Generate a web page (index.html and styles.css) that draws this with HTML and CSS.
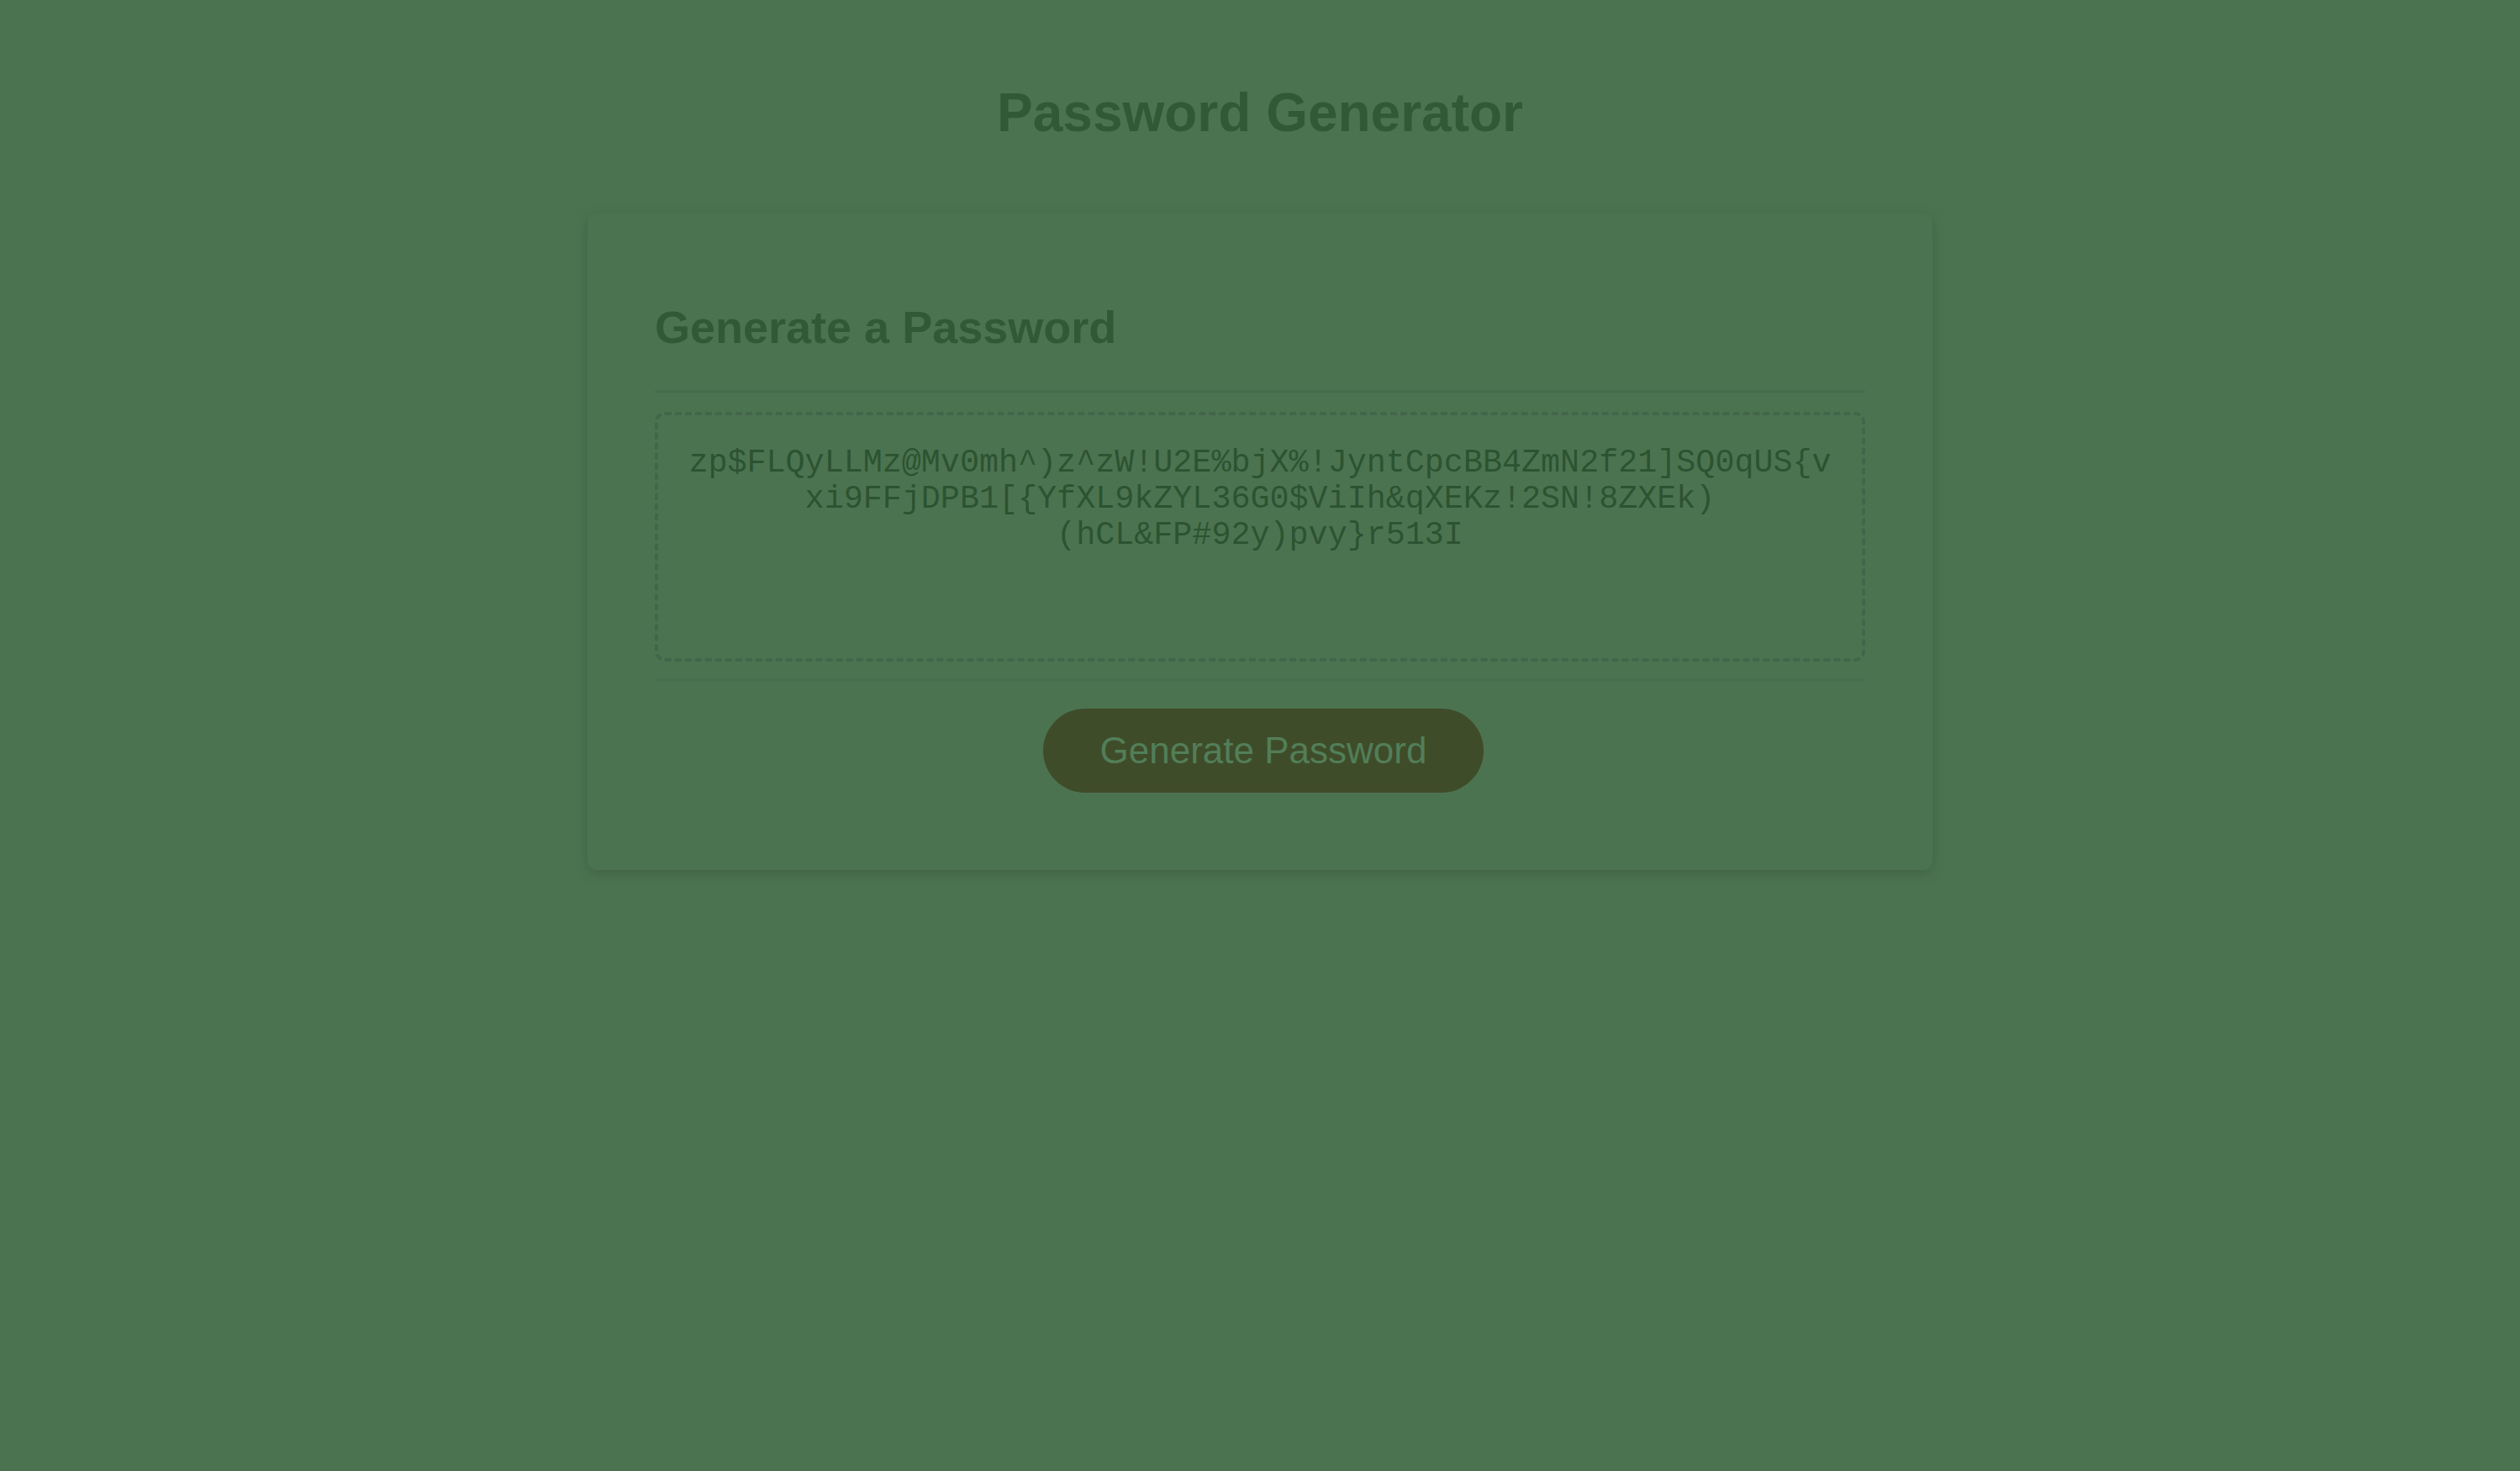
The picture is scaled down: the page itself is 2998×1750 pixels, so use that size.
FILE: index.html
```html
<!DOCTYPE html>
<html lang="en">
<head>
<meta charset="UTF-8">
<title>Password Generator</title>
<link rel="stylesheet" href="styles.css">
</head>
<body>
<div class="wrapper">
  <header>
    <h1>Password Generator</h1>
  </header>
  <div class="card">
    <div class="card-header">
      <h2>Generate a Password</h2>
    </div>
    <div class="card-body">
      <textarea readonly id="password" rows="2" placeholder="Your Secure Password" aria-label="Generated Password">zp$FLQyLLMz@Mv0mh^)z^zW!U2E%bjX%!JyntCpcBB4ZmN2f21]SQ0qUS{vxi9FFjDPB1[{YfXL9kZYL36G0$ViIh&amp;qXEKz!2SN!8ZXEk)(hCL&amp;FP#92y)pvy}r513I</textarea>
    </div>
    <div class="card-footer">
      <button id="generate" class="btn">Generate Password</button>
    </div>
  </div>
</div>
</body>
</html>
```
FILE: styles.css
```css
*, *::before, *::after {
  box-sizing: border-box;
}

html, body {
  margin: 0;
  padding: 0;
  height: 100%;
}

body {
  font-family: "Liberation Sans", Arial, sans-serif;
  background-color: #4c7350;
}

.wrapper {
  height: 100%;
  padding: 54px 40px 0;
}

header {
  text-align: center;
  padding: 0 40px 40px;
  color: #305a35;
}

header h1 {
  font-size: 64px;
  margin: 43px 0;
  font-weight: bold;
}

.card {
  max-width: 1600px;
  margin: 0 auto;
  padding: 60px 80px;
  border-radius: 10px;
  background-color: #4c7350;
  box-shadow: rgba(0, 0, 0, 0.15) 0 4px 16px 0;
  color: #305a35;
  font-size: 36px;
}

.card-header h2 {
  font-size: 54px;
  margin: 44px 0;
}

.card-header::after,
.card-footer::before {
  content: " ";
  display: block;
  width: 100%;
  height: 4px;
  background: #486d4c;
}

.card-body {
  min-height: 200px;
}

#password {
  display: block;
  width: 100%;
  margin: 22px 0 20px;
  padding: 36px 30px 167px;
  border: 4px dashed #42664a;
  border-radius: 12px;
  background: transparent;
  color: #2c5331;
  font-family: "Liberation Mono", "Courier New", monospace;
  font-size: 38.4px;
  line-height: 43px;
  text-align: center;
  resize: none;
  overflow: hidden;
  outline: none;
}

.card-footer {
  text-align: center;
}

.btn {
  display: inline-block;
  border: none;
  background-color: #3f4c2a;
  color: #527e58;
  border-radius: 50px;
  font-family: "Liberation Sans", Arial, sans-serif;
  font-size: 44px;
  line-height: 44px;
  padding: 28px 68px;
  margin: 32px 32px 32px 40px;
  cursor: pointer;
}
```
